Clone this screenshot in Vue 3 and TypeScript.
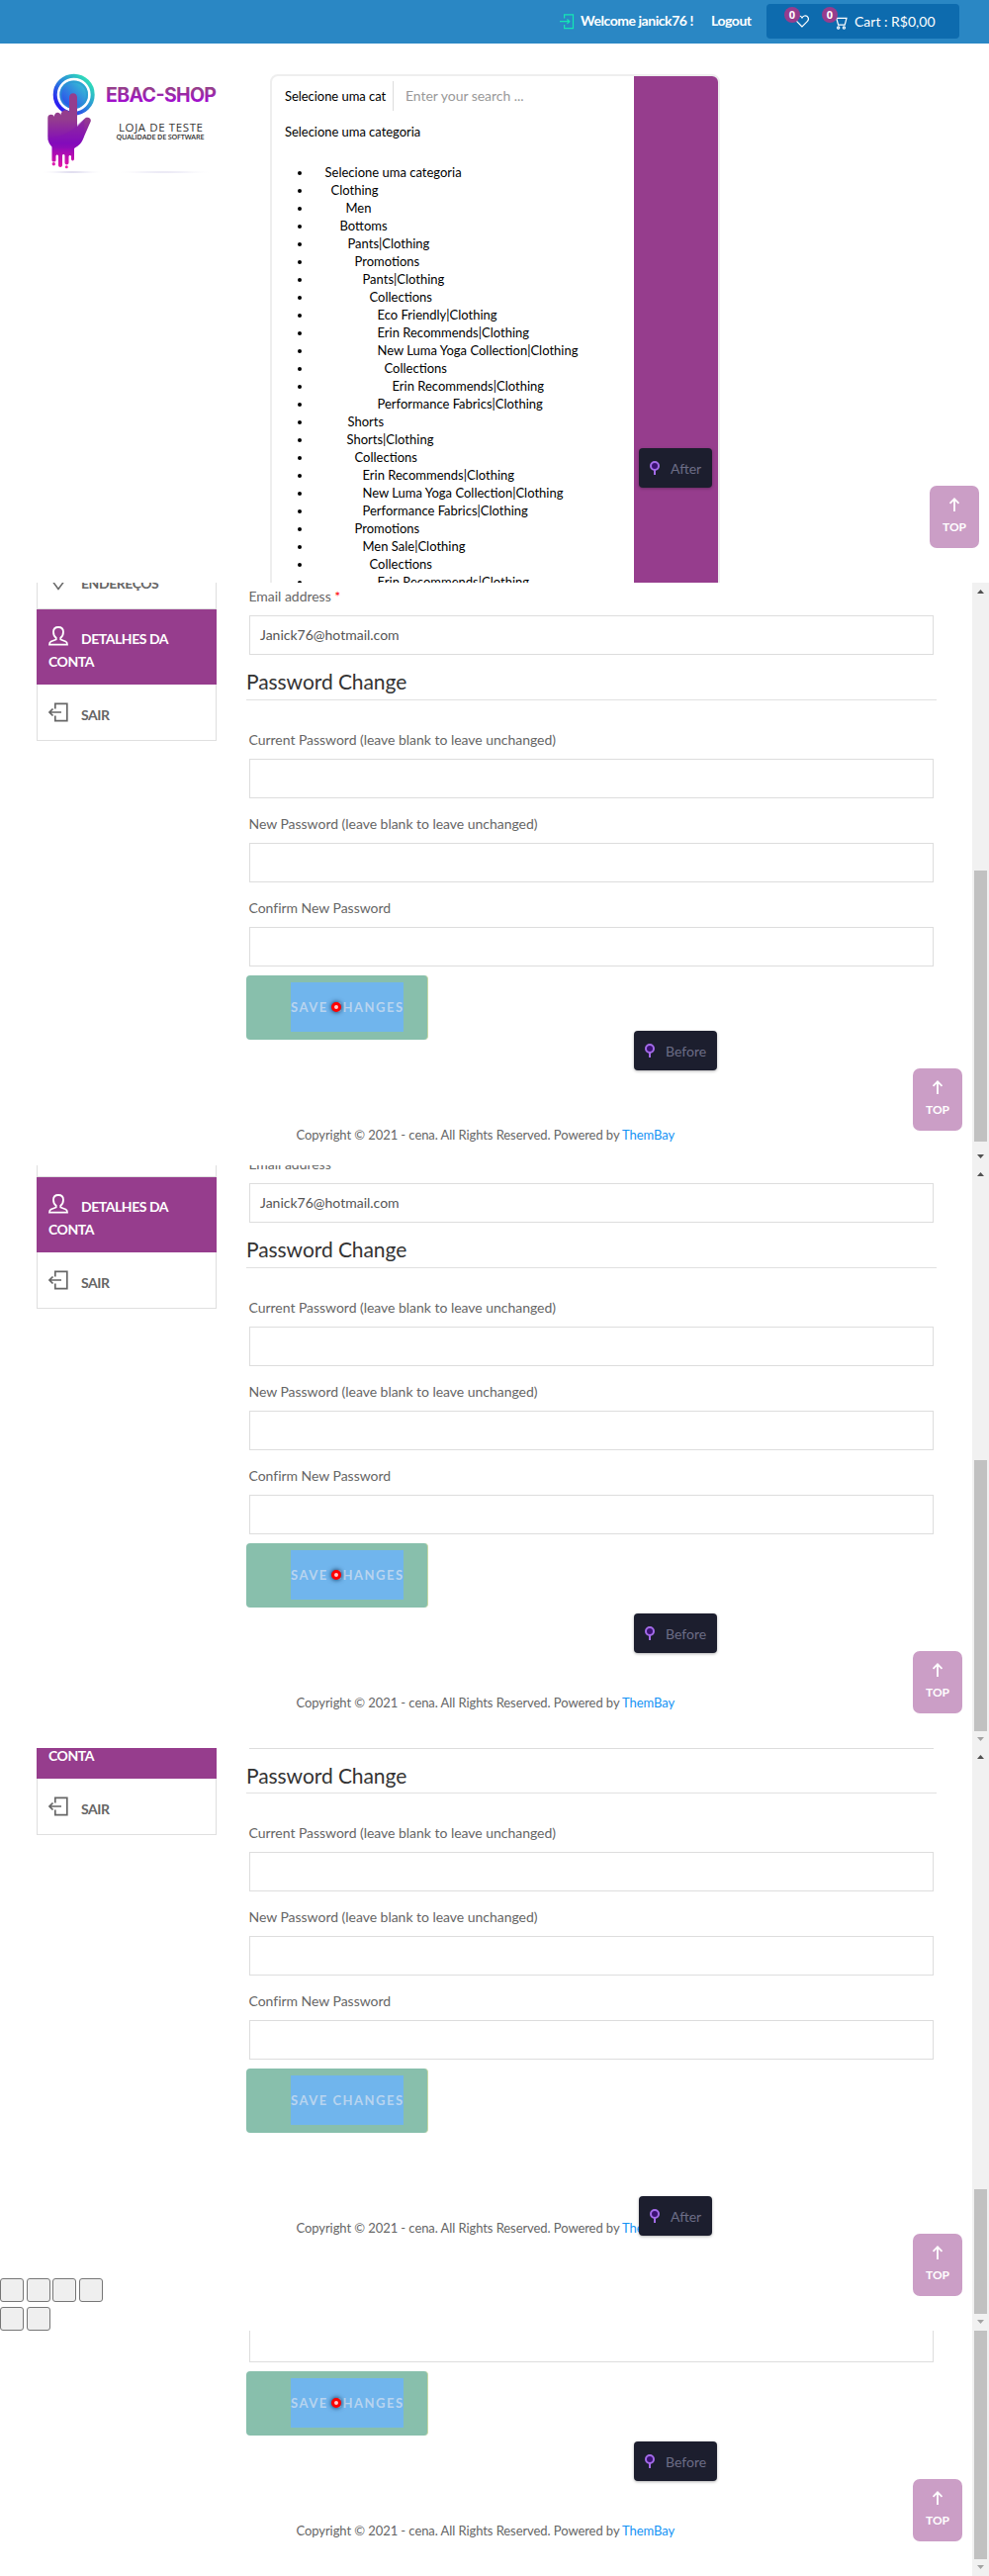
<script setup lang="ts">
interface Category { name: string; indent: number }
interface View {
  id: string
  height: number
  scroll: number
  thumbTop: number
  thumbHeight: number
  upArrow: boolean
  downActive: boolean
  pointer: boolean
  badge: string
  badgeTop: number
  topButton: number
  stray: boolean
}

const categories: Category[] = [
  { name: 'Selecione uma categoria', indent: 0 },
  { name: 'Clothing', indent: 6 },
  { name: 'Men', indent: 21 },
  { name: 'Bottoms', indent: 15 },
  { name: 'Pants|Clothing', indent: 23 },
  { name: 'Promotions', indent: 30 },
  { name: 'Pants|Clothing', indent: 38 },
  { name: 'Collections', indent: 45 },
  { name: 'Eco Friendly|Clothing', indent: 53 },
  { name: 'Erin Recommends|Clothing', indent: 53 },
  { name: 'New Luma Yoga Collection|Clothing', indent: 53 },
  { name: 'Collections', indent: 60 },
  { name: 'Erin Recommends|Clothing', indent: 68 },
  { name: 'Performance Fabrics|Clothing', indent: 53 },
  { name: 'Shorts', indent: 23 },
  { name: 'Shorts|Clothing', indent: 22 },
  { name: 'Collections', indent: 30 },
  { name: 'Erin Recommends|Clothing', indent: 38 },
  { name: 'New Luma Yoga Collection|Clothing', indent: 38 },
  { name: 'Performance Fabrics|Clothing', indent: 38 },
  { name: 'Promotions', indent: 30 },
  { name: 'Men Sale|Clothing', indent: 38 },
  { name: 'Collections', indent: 45 },
  { name: 'Erin Recommends|Clothing', indent: 53 },
]

const passwordFields = [
  'Current Password (leave blank to leave unchanged)',
  'New Password (leave blank to leave unchanged)',
  'Confirm New Password',
]

const views: View[] = [
  { id: 'a', height: 589, scroll: 30, thumbTop: 291, thumbHeight: 274, upArrow: true, downActive: true, pointer: true, badge: 'Before', badgeTop: 453, topButton: 491, stray: false },
  { id: 'b', height: 589, scroll: 45, thumbTop: 298, thumbHeight: 274, upArrow: true, downActive: false, pointer: true, badge: 'Before', badgeTop: 453, topButton: 491, stray: false },
  { id: 'c', height: 589, scroll: 102.8, thumbTop: 446, thumbHeight: 126, upArrow: true, downActive: false, pointer: false, badge: 'After', badgeTop: 453, topButton: 491, stray: true },
  { id: 'd', height: 248, scroll: 386, thumbTop: 0, thumbHeight: 231, upArrow: false, downActive: false, pointer: true, badge: 'Before', badgeTop: 112, topButton: 150, stray: false },
]
</script>

<template>
  <div class="page">
    <section class="shop">
      <header class="topbar">
        <svg class="enter" width="15" height="16" viewBox="0 0 15 16" fill="none" stroke="#14e8b4" stroke-width="1.2">
          <path d="M4.6 4.6V.8h8.9v13.9H4.6v-3.8M0 7.7h9.6M7.4 5.5l2.4 2.2-2.4 2.2" />
        </svg>
        <b class="welcome">Welcome janick76 !</b>
        <b class="logout">Logout</b>
        <div class="minicart">
          <span class="wish">
            <svg width="14" height="13" viewBox="0 0 14 13" fill="none" stroke="#fff" stroke-width="1.2">
              <path d="M7 12L1.5 6.4C.3 4.8.5 2.8 1.8 1.6 3.5.3 5.7.8 7 3c1.3-2.2 3.500-2.700 5.200-1.400 1.300 1.200 1.500 3.200.3 4.800z" />
            </svg>
            <i class="count">0</i>
          </span>
          <span class="cart">
            <svg width="14" height="14" viewBox="0 0 14 14" fill="none" stroke="#fff" stroke-width="1.2">
              <path d="M0 .9h2.300l2.300 8.200h6.600L13 2.300H2.800" />
              <circle cx="4.700" cy="12" r="1.100" /><circle cx="10.400" cy="12" r="1.100" />
            </svg>
            <i class="count">0</i>
          </span>
          <span class="cart-text">Cart : R$0,00</span>
        </div>
      </header>

      <div class="masthead">
        <svg class="logo" width="190" height="110" viewBox="0 0 190 110">
          <defs>
            <linearGradient id="ring" x1="1" y1="0" x2="0" y2="1">
              <stop offset=".1" stop-color="#30e0b8" /><stop offset=".5" stop-color="#2a86dc" /><stop offset=".9" stop-color="#2b12f4" />
            </linearGradient>
            <linearGradient id="disc" x1="1" y1="0" x2="0" y2="1">
              <stop offset="0" stop-color="#39d3d0" /><stop offset="1" stop-color="#2938f0" />
            </linearGradient>
            <linearGradient id="hand" x1="0" y1="0" x2="0" y2="1">
              <stop offset="0" stop-color="#943d8e" /><stop offset=".35" stop-color="#943d8e" /><stop offset=".68" stop-color="#8208bd" /><stop offset="1" stop-color="#e312a6" />
            </linearGradient>
            <linearGradient id="word" x1="0" y1="0" x2="0" y2="1">
              <stop offset=".25" stop-color="#963d8d" /><stop offset=".8" stop-color="#a10cd0" />
            </linearGradient>
            <radialGradient id="shade"><stop offset="0" stop-color="#b9b3dc" /><stop offset="1" stop-color="#fff" stop-opacity="0" /></radialGradient>
          </defs>
          <circle cx="44.700" cy="30.700" r="19" fill="none" stroke="url(#ring)" stroke-width="4" />
          <circle cx="44.700" cy="30.700" r="14.300" fill="url(#disc)" />
          <circle cx="44.700" cy="30.700" r="13.300" fill="none" stroke="#2798cf" stroke-width="2" opacity=".6" />
          <path fill="url(#hand)" d="M40 33.500C40 27.800 48 27.800 48 33.500V63L55.500 55C57.500 52.500 62.500 54 61.800 57.500L55 73C53 79 50 82 45 85V95.500C45 98 42 98 42 95.500V93.500C42 91.500 39.500 91.500 39.500 93.500V99.500C39.500 102 35.500 102 35.500 99.500V92.500C35.500 90.500 33 90.500 33 92.500V102C33 104.500 29 104.500 29 102V93C29 91 26.500 91 26.500 93V97C26.500 99 22.500 99 22.500 97V83.500C20.500 81 18.300 78 18.300 73V54C18.300 50 24.200 50 24.700 53C25 47.500 31 47.500 31.300 51.500C32 45 39 45 40 48.500z" />
          <path fill="#8510b8" opacity=".35" d="M18.300 75C32 74 44 67 48 61L55.500 55 55 73C53 79 50 82 45 85H25C21 82 18.300 79 18.300 75z" />
          <circle cx="24.300" cy="100.700" r="1.700" fill="#dc20b0" /><circle cx="37.300" cy="103.800" r="1.500" fill="#ef24a8" />
          <ellipse cx="43" cy="109" rx="33" ry="1.800" fill="url(#shade)" opacity=".8" />
          <ellipse cx="136" cy="109" rx="56" ry="1.200" fill="url(#shade)" opacity=".8" />
          <text x="77" y="38" font-family="Inter, sans-serif" font-weight="700" font-size="19.500" textLength="112" fill="url(#word)">EBAC-SHOP</text>
          <text x="90" y="68" font-family="'Open Sans', sans-serif" font-size="11.500" textLength="85" fill="#333">LOJA DE TESTE</text>
          <text x="87.500" y="76" font-family="'Open Sans', sans-serif" font-weight="600" font-size="7.300" textLength="89" fill="#333">QUALIDADE DE SOFTWARE</text>
        </svg>

        <div class="search">
          <div class="search-main">
            <div class="search-row">
              <div class="cat-select"><span>Selecione uma cat</span></div>
              <div class="query">Enter your search ...</div>
            </div>
            <div class="chosen">Selecione uma categoria</div>
            <ul class="categories">
              <li v-for="(c, i) in categories" :key="i">
                <span class="category" :style="{ marginLeft: c.indent + 'px' }">{{ c.name }}</span>
              </li>
            </ul>
          </div>
          <div class="search-button"></div>
        </div>
      </div>
      <div class="badge after" style="top: 453px">
        <svg width="10" height="15" viewBox="0 0 10 15"><path d="M5 8v6" stroke="#a36be8" stroke-width="2" /><circle cx="5" cy="5" r="4" fill="#3b1173" stroke="#a36be8" stroke-width="2" /></svg>
        <span>After</span>
      </div>
      <div class="to-top wide" style="top: 491px">
        <svg width="12" height="14" viewBox="0 0 12 14" fill="none" stroke="#fff" stroke-width="1.800"><path d="M6 14V1.500M1.500 5.800L6 1.300l4.500 4.500" /></svg>
        <span class="top-text">TOP</span>
      </div>
    </section>

    <section v-for="v in views" :key="v.id" class="view" :style="{ height: v.height + 'px' }">
      <div class="viewport">
        <div class="account" :style="{ marginTop: -v.scroll + 'px' }">
          <nav class="side">
            <div class="nav-item">
              <svg class="nav-icon" width="20" height="20" viewBox="0 0 20 20" fill="none" stroke="#666" stroke-width="1.500"><path d="M10 18.500L4.500 11C1.500 6 5 1.500 10 1.500S18.500 6 15.500 11z" /><circle cx="10" cy="7.500" r="2.500" /></svg><span>ENDEREÇOS</span>
            </div>
            <div class="nav-item active">
              <svg class="nav-icon" width="20" height="20" viewBox="0 0 20 20" fill="none" stroke="#fff" stroke-width="1.800"><path d="M7.700 11.800C5.600 10.300 5 8 5 5.800 5 2.800 7 1 10 1s5 1.800 5 4.800c0 2.200-.6 4.500-2.700 6v1.700l5.200 2c1 .4 1.500 1.500 1.500 3.200H1c0-1.700.5-2.800 1.500-3.200l5.200-2z" /></svg><span>DETALHES DA CONTA</span>
            </div>
            <div class="nav-item">
              <svg class="nav-icon" width="20" height="20" viewBox="0 0 20 20" fill="none" stroke="#666" stroke-width="1.700"><path d="M6.800 6.500V1.300h12v17.400h-12v-5.200M1 10h12M4.500 6.500L1 10l3.500 3.500" /></svg><span>SAIR</span>
            </div>
          </nav>
          <main class="form">
            <div class="field first">
              <div class="label">Email address <em>*</em></div>
              <div class="input">Janick76@hotmail.com</div>
            </div>
            <div class="heading">Password Change</div>
            <div v-for="f in passwordFields" :key="f" class="field">
              <div class="label">{{ f }}</div>
              <div class="input"></div>
            </div>
            <div class="save-box">
              <div class="save-inner">SAVE CHANGES</div>
              <i v-if="v.pointer" class="pointer"></i>
            </div>
            <footer class="footer">Copyright © 2021 - cena. All Rights Reserved. Powered by <a>ThemBay</a></footer>
          </main>
        </div>
        <div v-if="v.stray" class="stray">
          <div><i></i><i></i><i></i><i></i></div>
          <div><i></i><i></i></div>
        </div>
        <div class="badge" :class="v.badge.toLowerCase()" :style="{ top: v.badgeTop + 'px' }">
          <svg width="10" height="15" viewBox="0 0 10 15"><path d="M5 8v6" stroke="#a36be8" stroke-width="2" /><circle cx="5" cy="5" r="4" fill="#3b1173" stroke="#a36be8" stroke-width="2" /></svg>
          <span>{{ v.badge }}</span>
        </div>
        <div class="to-top" :style="{ top: v.topButton + 'px' }">
          <svg width="12" height="14" viewBox="0 0 12 14" fill="none" stroke="#fff" stroke-width="1.800"><path d="M6 14V1.500M1.500 5.800L6 1.300l4.500 4.500" /></svg>
          <span class="top-text">TOP</span>
        </div>
      </div>
      <div class="scrollbar">
        <div class="thumb" :style="{ marginTop: v.thumbTop + 'px', height: v.thumbHeight + 'px' }"></div>
        <i v-if="v.upArrow" class="arrow up"></i>
        <i class="arrow down" :class="{ muted: !v.downActive }"></i>
      </div>
    </section>
  </div>
</template>

<style>
body { background: #fff; }
</style>
<style scoped>
.page { width: 1000px; height: 2604px; overflow: hidden; background: #fff; font-family: Lato, sans-serif; font-size: 14px; color: #666; }
.page * { box-sizing: border-box; }
i, em { font-style: normal; }
.shop { position: relative; height: 589px; overflow: hidden; background: #fff; }
.topbar { display: flex; height: 44px; background: #2a87c4; color: #fff; padding-left: 566px; align-items: flex-start; white-space: nowrap; }
.enter { margin-top: 14px; }
.welcome { width: 132px; margin-left: 6px; line-height: 42px; letter-spacing: -.45px; }
.logout { width: 56px; line-height: 42px; letter-spacing: -.45px; }
.minicart { display: flex; width: 195px; height: 35px; margin-top: 4px; background: #0d6bae; border-radius: 4px; padding-left: 29px; }
.wish, .cart { position: relative; width: 39px; padding-top: 11px; line-height: 0; }
.cart { width: 31px; padding-top: 12px; }
.count { position: absolute; left: -11px; top: 3px; width: 16px; height: 16px; border-radius: 8px; background: #963d8d; font: 700 11px/16px 'Open Sans', sans-serif; text-align: center; }
.cart .count { left: -12px; }
.cart-text { line-height: 36px; margin-left: -10px; }
.masthead { display: flex; padding-top: 31px; }
.logo { margin: -10px 0 0 30px; width: 190px; height: 110px; }
.search { display: flex; margin-left: 53px; width: 455px; height: 700px; border: 2px solid #eee; border-radius: 8px; overflow: hidden; color: #000; white-space: nowrap; }
.search-main { width: 366px; padding-left: 13px; }
.search-button { width: 85px; background: #963d8d; }
.search-row { display: flex; height: 38px; padding-top: 5px; line-height: 30px; }
.cat-select { width: 110px; border-right: 1px solid #ddd; font-size: 13px; height: 30px; }
.cat-select span { letter-spacing: -.05px; }
.query { margin-left: 12px; color: #999; letter-spacing: -.04px; }
.chosen { font-size: 13px; line-height: 37px; letter-spacing: -.04px; }
.categories { list-style: disc; margin: 13px 0 0; padding-left: 28px; font-size: 13px; line-height: 18px; }
.category { padding-left: 12.500px; }
.badge { position: absolute; height: 40px; background: #1c1e2e; border-radius: 4px; display: flex; align-items: center; color: #6c6d86; box-shadow: 0 1px 3px rgba(0,0,0,.3); padding-left: 11px; }
.badge svg { margin-right: 11px; }
.after { left: 646px; width: 74px; }
.before { left: 641px; width: 84px; }
.to-top { position: absolute; left: 923px; width: 50px; height: 63px; border-radius: 7px; background: #cb9ec6; color: #fff; display: flex; flex-direction: column; align-items: center; padding-top: 12px; }
.to-top.wide { left: 940px; }
.top-text { font-weight: 700; font-size: 12px; line-height: 16px; margin-top: 8px; }
.view { display: flex; overflow: hidden; background: #fff; }
.viewport { position: relative; width: 983px; overflow: hidden; }
.account { display: flex; padding-left: 37px; }
.side { width: 182px; padding-top: .4px; flex: none; }
.nav-item { height: 57px; border: 1px solid #dfdfdf; border-top: 0; padding: 18px 11px 0; font-weight: 700; line-height: 23px; color: #666; letter-spacing: -.45px; }
.nav-item.active { height: 76px; background: #963d8d; border-color: #963d8d; color: #fff; padding-top: 17px; }
.nav-icon { vertical-align: -2px; margin-right: 13px; }
.form { width: 698px; margin-left: 30px; flex: none; padding-top: 32.400px; }
.field { padding: 0 3px 14px; }
.field.first { padding-bottom: 0; }
.label { height: 24px; line-height: 24px; margin: 0 0 7px -.5px; letter-spacing: -.03px; }
.label em { color: red; }
.input { height: 40px; border: 1px solid #ddd; padding: 0 10px; line-height: 38px; color: #555; }
.heading { height: 45.600px; border-bottom: 1px solid #e1e1e1; margin-bottom: 28px; font-size: 21px; line-height: 54px; color: #333; letter-spacing: -.07px; }
.save-box { position: relative; width: 184px; height: 65px; margin-top: -5px; background: #88bfac; border-radius: 4px; border-right: 1px solid #c9d9a5; padding: 7px 0 0 45px; }
.save-inner { width: 114px; height: 50px; background: #70b5ed; line-height: 50px; color: #b8d4ef; font-weight: 700; font-size: 13px; letter-spacing: 1.500px; white-space: nowrap; }
.pointer { position: absolute; left: 86px; top: 27px; width: 10px; height: 10px; border-radius: 5px; border: 3px solid red; background: #fcc; box-shadow: 0 0 5px #024; }
.footer { margin-top: 84px; padding-left: 50.500px; line-height: 24px; height: 160px; font-size: 13px; white-space: nowrap; letter-spacing: -.075px; }
.footer a { color: #1493f5; }
.stray { position: absolute; left: 0; top: 536px; display: flex; flex-direction: column; gap: 5px; }
.stray div { display: flex; gap: 2.670px; }
.stray i { width: 24px; height: 24px; border: 1px solid #767676; border-radius: 3px; background: #efefef; }
.scrollbar { position: relative; width: 17px; background: #f1f1f1; overflow: hidden; padding-left: 2px; }
.thumb { width: 13px; background: #c1c1c1; }
.arrow { position: absolute; left: 5px; width: 7px; height: 4px; background: #505050; }
.up { top: 7px; clip-path: polygon(50% 0, 100% 100%, 0 100%); }
.down { bottom: 7px; clip-path: polygon(0 0, 100% 0, 50% 100%); }
.muted { background: #a3a3a3; }
</style>
